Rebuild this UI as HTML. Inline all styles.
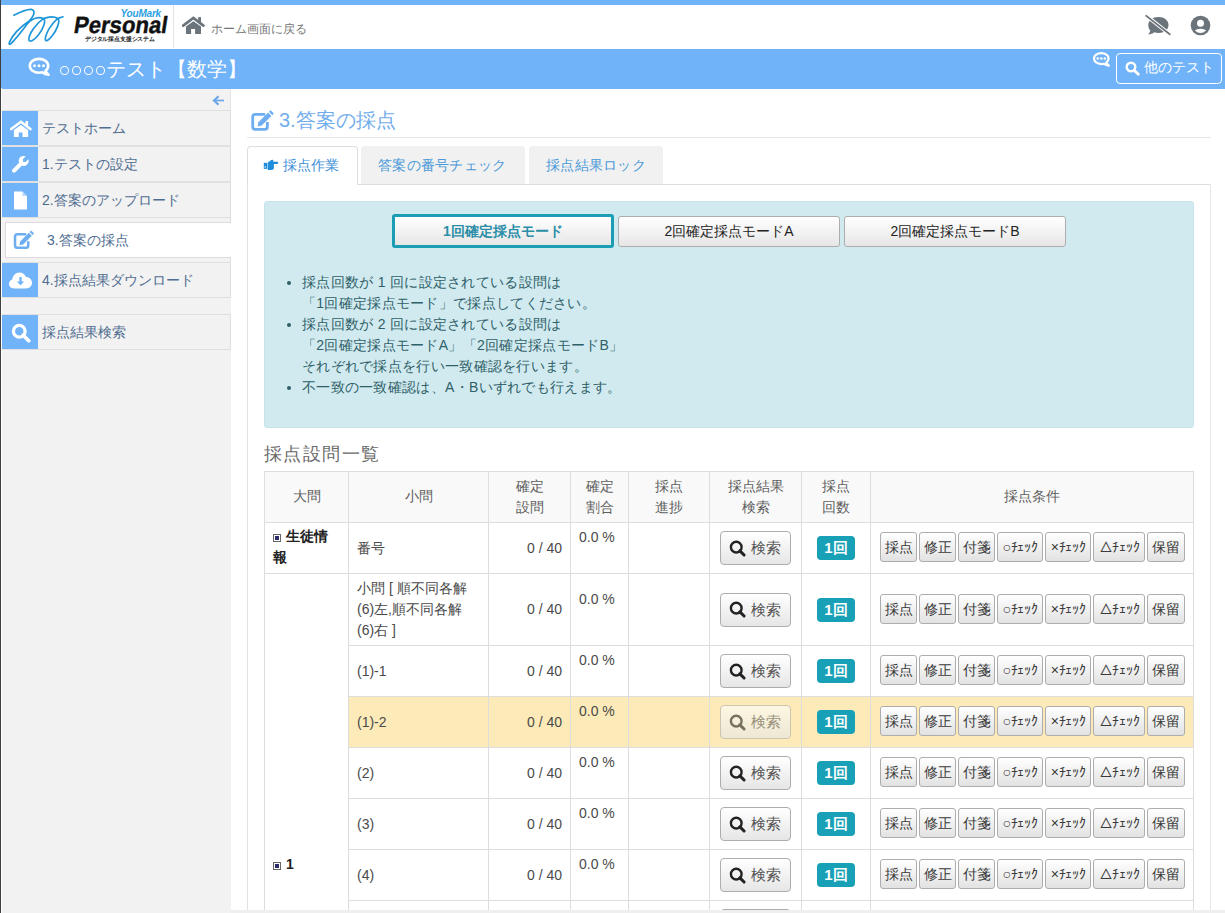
<!DOCTYPE html>
<html lang="ja"><head><meta charset="utf-8">
<style>
*{box-sizing:border-box;}
html,body{margin:0;padding:0;}
body{width:1225px;height:913px;overflow:hidden;position:relative;background:#fff;font-family:"Liberation Sans",sans-serif;font-size:14px;color:#333;}
.abs{position:absolute;}
svg{display:block;}
#edge{left:0;top:0;width:1px;height:913px;background:#404040;z-index:10;}
#topbar{left:0;top:0;width:1225px;height:5px;background:#70b3f8;}
#header{left:0;top:5px;width:1225px;height:44px;background:#fff;}
#titlebar{left:0;top:49px;width:1225px;height:40px;background:#70b3f8;z-index:3;}
#side{left:1px;top:88px;width:230px;height:825px;background:#f2f2f2;}
.nav{position:absolute;left:0;width:230px;height:36px;border:1px solid #e0e0e0;border-left:none;background:#f2f2f2;}
.nav .ic{position:absolute;left:1px;top:0;width:36px;height:34px;background:#70b3f8;}
.nav .ic svg{position:absolute;}
.nav .tx{position:absolute;left:41px;top:0;line-height:34px;font-size:14px;color:#4f6d91;white-space:nowrap;}
#bottomstrip{left:231px;top:910px;width:994px;height:3px;background:#efefef;z-index:5;}

.mode{border:1px solid #adadad;border-radius:3px;background:linear-gradient(#fff,#e6e6e6);font-size:14px;color:#222;text-align:center;line-height:29px;white-space:nowrap;}
.mode.sel{border:3px solid #1b9db3;color:#2b8ea8;font-weight:bold;line-height:28px;}
#bul ul{margin:0;padding:0 0 0 38px;font-size:14px;line-height:21px;color:#2f5f68;letter-spacing:0.3px;}
#bul li{white-space:nowrap;}

.th{text-align:center;font-size:14px;line-height:21px;color:#5e5e5e;white-space:nowrap;}
.td{font-size:14px;line-height:21px;color:#4a4a4a;white-space:nowrap;}
.sbtn{width:71px;height:34px;border:1px solid #adadad;border-radius:4px;background:linear-gradient(#fff,#e6e6e6);color:#222;}
.sbtn span{position:absolute;left:30px;top:6px;font-size:15px;line-height:20px;color:#555;}
.sbtn.dis{opacity:.6;}
.badge{width:38px;height:24px;border-radius:4px;background:#17a0b6;color:#fff;font-weight:bold;font-size:15px;line-height:24px;text-align:center;}
.cbtn{height:30px;border:1px solid #adadad;border-radius:3px;background:linear-gradient(#fff,#e2e2e2);font-size:14px;line-height:28px;text-align:center;color:#3a3a3a;white-space:nowrap;overflow:hidden;}
.hw{font-size:14px;letter-spacing:-0.3px;}
.dai{font-size:14px;line-height:21px;font-weight:bold;color:#222;white-space:nowrap;}
.dai .box{display:inline-block;width:8px;height:8px;border:1px solid #666;margin-right:5px;vertical-align:-1px;position:relative;}
.dai .box:after{content:"";position:absolute;left:1px;top:1px;width:4px;height:4px;background:#2c2c6c;}
</style></head><body>
<div id="edge" class="abs"></div><div class="abs" style="left:1px;top:88px;width:1px;height:825px;background:#fff;z-index:10;"></div>
<div id="topbar" class="abs"></div>
<div id="header" class="abs">
  <!-- logo mark -->
  <svg class="abs" style="left:0;top:0" width="70" height="43" viewBox="0 5 70 43">
    <path d="M13.8,15.2 C19,12.5 26,9 31.3,9.3 C34.5,9.6 34.5,13 33,15.9 C31.8,18 30.8,19.5 29.5,20.7 C21,26.5 12.5,35 9.5,42 C8.5,44.5 9.8,45 11.5,43.2 C15.5,39 20,33.5 23.4,29 C25.5,26 27.5,23.5 30,21 C34,18 39.5,17 43.5,18.6 C46.5,20.5 43,29.5 38,35.5 C33.5,41 29.5,42.5 28.8,39.8 C28.5,34 36.5,23 43.5,18.6 C48,16.8 54,16.2 57.8,18.4 C60.8,21 56.5,30.5 52,36 C48,41 45.5,42 45.3,39 C45.8,33 51.5,23.5 57.8,18.4 L63,16.8" fill="none" stroke="#1e96d8" stroke-width="1.7" stroke-linecap="round" stroke-linejoin="round"/>
  </svg>
  <div class="abs" style="left:120.5px;top:3px;font-size:10px;line-height:12px;font-weight:bold;font-style:italic;color:#2ba0e0;letter-spacing:-0.2px;">YouMark</div>
  <div class="abs" style="left:72.5px;top:6px;font-size:23.5px;line-height:28px;font-weight:bold;color:#111;-webkit-text-stroke:0.4px #111;transform-origin:0 22px;transform:skewX(-9deg) scaleX(0.94);">Personal</div>
  <div class="abs" style="left:85px;top:30px;font-size:6px;line-height:8px;font-weight:bold;color:#222;white-space:nowrap;transform-origin:0 0;transform:scaleX(0.97);">デジタル採点支援システム</div>
  <div class="abs" style="left:173px;top:0;width:1px;height:43px;background:#e3e3e3;"></div>
  <svg class="abs" style="left:182px;top:11px" width="23" height="19" viewBox="0 0 23 19">
    <path d="M1.2,9.6 L11.4,1.9 L21.4,9.6" fill="none" stroke="#6b737b" stroke-width="2.7" stroke-linecap="round" stroke-linejoin="miter"/>
    <rect x="16.2" y="1.1" width="2.8" height="5.5" fill="#6b737b"/>
    <path d="M4,10.6 L11.4,5.2 L19,10.6 L19,17.9 L13.1,17.9 L13.1,13.1 L9.1,13.1 L9.1,17.9 L4,17.9 Z" fill="#6b737b"/>
  </svg>
  <div class="abs" style="left:210.5px;top:15.5px;font-size:12px;line-height:16px;color:#777;white-space:nowrap;">ホーム画面に戻る</div>
  <!-- comment slash -->
  <svg class="abs" style="left:1144px;top:9px" width="28" height="23" viewBox="0 0 28 23">
    <path d="M14.5,3 C20.3,3 24.5,6.5 24.5,11 C24.5,15.5 20.3,19 14.5,19 C13,19 11.6,18.8 10.3,18.3 C8.6,19.6 6.6,20.4 4.2,20.6 C5.3,19.4 6.1,18 6.3,16.6 C5,15.2 4.3,13.2 4.3,11 C4.3,6.5 8.7,3 14.5,3 Z" fill="#6b737b"/>
    <path d="M2,1.5 L26,20.5" stroke="#fff" stroke-width="3.6"/>
    <path d="M2.3,1.8 L25.7,20.2" stroke="#6b737b" stroke-width="1.7" stroke-linecap="square"/>
  </svg>
  <!-- user circle -->
  <svg class="abs" style="left:1190px;top:10px" width="21" height="21" viewBox="0 0 21 21">
    <defs><clipPath id="uc"><circle cx="10.5" cy="10.5" r="7.4"/></clipPath></defs>
    <circle cx="10.5" cy="10.5" r="9.8" fill="#6b737b"/>
    <circle cx="10.5" cy="8.2" r="3.5" fill="#fff"/>
    <path d="M2,21 C2.5,16 6,13.8 10.5,13.8 C15,13.8 18.5,16 19,21 Z" fill="#fff" clip-path="url(#uc)"/>
  </svg>
</div>
<div id="titlebar" class="abs">
  <svg class="abs" style="left:24px;top:5px" width="30" height="26" viewBox="0 0 30 26">
    <path d="M15,4.9 C20.1,4.9 24.2,7.9 24.2,11.8 C24.2,13.9 23.1,15.7 21.3,17 L24.6,20.8 C22,20.6 19.8,19.6 18.3,18.3 C17.3,18.6 16.2,18.7 15,18.7 C9.9,18.7 5.8,15.6 5.8,11.8 C5.8,7.9 9.9,4.9 15,4.9 Z" fill="none" stroke="#fff" stroke-width="2.6" stroke-linejoin="round"/>
    <circle cx="10.5" cy="11.7" r="1.5" fill="#fff"/><circle cx="15" cy="11.7" r="1.5" fill="#fff"/><circle cx="19.5" cy="11.7" r="1.5" fill="#fff"/>
  </svg>
  <div class="abs" style="left:59.8px;top:17px;width:9px;height:9.4px;border:1.4px solid #fff;border-radius:50%;"></div><div class="abs" style="left:71.9px;top:17px;width:9px;height:9.4px;border:1.4px solid #fff;border-radius:50%;"></div><div class="abs" style="left:84.0px;top:17px;width:9px;height:9.4px;border:1.4px solid #fff;border-radius:50%;"></div><div class="abs" style="left:96.3px;top:17px;width:9px;height:9.4px;border:1.4px solid #fff;border-radius:50%;"></div><div class="abs" style="left:106px;top:7.5px;font-size:20px;line-height:24px;color:#fff;white-space:nowrap;letter-spacing:0.2px;">テスト【数学】</div>
  <svg class="abs" style="left:1093px;top:2.9px" width="17" height="14.9" viewBox="4.5 3.5 21.5 18.8">
    <path d="M15,4.9 C20.1,4.9 24.2,7.9 24.2,11.8 C24.2,13.9 23.1,15.7 21.3,17 L24.6,20.8 C22,20.6 19.8,19.6 18.3,18.3 C17.3,18.6 16.2,18.7 15,18.7 C9.9,18.7 5.8,15.6 5.8,11.8 C5.8,7.9 9.9,4.9 15,4.9 Z" fill="none" stroke="#fff" stroke-width="2.8" stroke-linejoin="round"/>
    <circle cx="10.5" cy="11.7" r="1.6" fill="#fff"/><circle cx="15" cy="11.7" r="1.6" fill="#fff"/><circle cx="19.5" cy="11.7" r="1.6" fill="#fff"/>
  </svg>
  <div class="abs" style="left:1116px;top:4px;width:106px;height:31px;border:1px solid #fff;border-radius:4px;"></div>
  <svg class="abs" style="left:1125px;top:11.5px" width="15" height="15" viewBox="0 0 15 15">
    <circle cx="6" cy="6" r="4.3" fill="none" stroke="#fff" stroke-width="2.4"/>
    <path d="M9.2,9.2 L13.3,13.3" stroke="#fff" stroke-width="2.8" stroke-linecap="round"/>
  </svg>
  <div class="abs" style="left:1144px;top:9px;font-size:14px;line-height:18px;color:#fff;white-space:nowrap;">他のテスト</div>
</div>
<div id="side" class="abs">
  <div class="abs" style="left:229px;top:2px;width:1px;height:20px;background:#e3e3e3;"></div>
  <svg class="abs" style="left:211px;top:7px" width="13" height="11" viewBox="0 0 13 11">
    <path d="M12,5.5 L2.5,5.5" stroke="#6ea6ea" stroke-width="1.7"/><path d="M6.5,1.2 L2,5.5 L6.5,9.8" fill="none" stroke="#6ea6ea" stroke-width="2.2"/>
  </svg>
  <div class="nav" style="top:22px;">
    <div class="ic"><svg style="left:7.5px;top:8.5px" width="22" height="18" viewBox="0 0 23 19">
      <path d="M1.2,9.6 L11.4,1.9 L21.4,9.6" fill="none" stroke="#fff" stroke-width="2.7" stroke-linecap="round" stroke-linejoin="miter"/>
    <rect x="16.2" y="1.1" width="2.8" height="5.5" fill="#fff"/>
    <path d="M4,10.6 L11.4,5.2 L19,10.6 L19,17.9 L13.1,17.9 L13.1,13.1 L9.1,13.1 L9.1,17.9 L4,17.9 Z" fill="#fff"/></svg></div>
    <div class="tx">テストホーム</div>
  </div>
  <div class="nav" style="top:58px;">
    <div class="ic"><svg style="left:9px;top:8px" width="19" height="19" viewBox="0 0 19 19">
      <path d="M17.5,4.2 L14.6,7 L12,6.8 L11.8,4.3 L14.6,1.5 C12.4,0.6 9.9,1.2 8.6,3 C7.6,4.4 7.5,6.2 8.1,7.7 L1.6,14.2 C0.8,15 0.8,16.3 1.6,17.1 C2.4,17.9 3.7,17.9 4.5,17.1 L11,10.6 C12.6,11.3 14.5,11 15.8,9.8 C17.5,8.3 18.2,6.2 17.5,4.2 Z" fill="#fff"/></svg></div>
    <div class="tx">1.テストの設定</div>
  </div>
  <div class="nav" style="top:94px;">
    <div class="ic"><svg style="left:11px;top:8px" width="15" height="19" viewBox="0 0 15 19">
      <path d="M1,0.5 L9.5,0.5 L14,5 L14,18.5 L1,18.5 Z" fill="#fff"/><path d="M9.5,0.5 L9.5,5 L14,5" fill="#70b3f8" opacity="0.5"/></svg></div>
    <div class="tx">2.答案のアップロード</div>
  </div>
  <div class="abs" style="left:229px;top:129px;width:1px;height:5px;background:#dcdcdc;"></div><div class="abs" style="left:229px;top:170px;width:1px;height:5px;background:#dcdcdc;"></div>
  <div class="abs" style="left:4px;top:134px;width:226px;height:36px;border:1px solid #dcdcdc;border-right:none;background:#fff;">
    <svg class="abs" style="left:3.3px;top:2.2px" width="30.6" height="28.8" viewBox="0 0 34 32">
    <path d="M19.2,10.4 L9.2,10.4 Q6.7,10.4 6.7,12.9 L6.7,22.8 Q6.7,25.3 9.2,25.3 L18.9,25.3 Q21.4,25.3 21.4,22.8 L21.4,18" fill="none" stroke="#6eaef0" stroke-width="2.8"/>
    <path d="M11.6,22.6 L12.4,18.3 L22.1,8.6 L25.4,11.9 L15.7,21.6 Z" fill="#6eaef0"/>
    <path d="M22.9,7.8 L24,6.7 Q24.6,6.1 25.2,6.7 L27.4,8.9 Q28,9.5 27.4,10.1 L26.3,11.2 Z" fill="#6eaef0"/>
  </svg>
    <div class="abs" style="left:41px;top:0;line-height:34px;font-size:14px;color:#4f6d91;white-space:nowrap;">3.答案の採点</div>
  </div>
  <div class="nav" style="top:174px;">
    <div class="ic"><svg style="left:6px;top:8px" width="25" height="19" viewBox="0 0 25 19">
      <path d="M6,17.5 C3,17.5 1,15.5 1,12.8 C1,10.6 2.4,8.9 4.4,8.3 C4.6,4.5 7.6,1.5 11.5,1.5 C14.5,1.5 17,3.3 18,6 C21.3,6 24,8.6 24,11.8 C24,15 21.5,17.5 18.3,17.5 Z" fill="#fff"/>
      <path d="M12.5,6 L12.5,12" stroke="#70b3f8" stroke-width="2.4"/><path d="M8.8,10.5 L16.2,10.5 L12.5,14.3 Z" fill="#70b3f8"/></svg></div>
    <div class="tx">4.採点結果ダウンロード</div>
  </div>
  <div class="nav" style="top:226px;">
    <div class="ic"><svg style="left:8.5px;top:7.5px" width="20" height="20" viewBox="0 0 15 15">
      <circle cx="6.2" cy="6.2" r="4.4" fill="none" stroke="#fff" stroke-width="2.5"/>
      <path d="M9.2,9.2 L13.3,13.3" stroke="#fff" stroke-width="2.8" stroke-linecap="round"/></svg></div>
    <div class="tx">採点結果検索</div>
  </div>
</div>
<div id="main" class="abs" style="left:0;top:0;width:1225px;height:913px;pointer-events:none;">
  <!-- page title -->
  <svg class="abs" style="left:246px;top:104px" width="34" height="32" viewBox="0 0 34 32">
    <path d="M19.2,10.4 L9.2,10.4 Q6.7,10.4 6.7,12.9 L6.7,22.8 Q6.7,25.3 9.2,25.3 L18.9,25.3 Q21.4,25.3 21.4,22.8 L21.4,18" fill="none" stroke="#6eaef0" stroke-width="2.8"/>
    <path d="M11.6,22.6 L12.4,18.3 L22.1,8.6 L25.4,11.9 L15.7,21.6 Z" fill="#6eaef0"/>
    <path d="M22.9,7.8 L24,6.7 Q24.6,6.1 25.2,6.7 L27.4,8.9 Q28,9.5 27.4,10.1 L26.3,11.2 Z" fill="#6eaef0"/>
  </svg>
  <div class="abs" style="left:279px;top:107px;font-size:20px;line-height:26px;color:#72adec;white-space:nowrap;">3.答案の採点</div>
  <div class="abs" style="left:247px;top:137px;width:964px;height:1px;background:#e6e6e6;"></div>
  <!-- tabs -->
  <div class="abs" style="left:357px;top:184px;width:854px;height:1px;background:#dedede;"></div>
  <div class="abs" style="left:247px;top:184px;width:1px;height:729px;background:#e2e2e2;"></div>
  <div class="abs" style="left:247px;top:146px;width:111px;height:39px;border:1px solid #dedede;border-bottom:none;border-radius:4px 4px 0 0;background:#fff;"></div>
  <div class="abs" style="left:1210px;top:184px;width:1px;height:729px;background:#e6e6e6;"></div>
  <svg class="abs" style="left:263px;top:158px" width="16" height="13" viewBox="0 0 16 13">
    <path d="M0.8,4.8 L4.3,4.8 L4.3,10.9 L0.8,10.9 Z" fill="#1f8ddb"/><rect x="1.6" y="8.4" width="1.2" height="1.2" fill="#fff"/>
    <path d="M4.8,4.6 L7.6,2.6 C8.3,1.8 9.6,1.6 10.1,2.3 L10.5,3.7 L14.3,3.7 C15.3,3.7 15.6,4.9 15,5.5 C14.8,5.8 14.5,5.9 14.2,5.9 L10.9,5.9 L10.9,9.8 C10.9,11.2 9.8,12 8.4,12 L4.8,12 Z" fill="#1f8ddb"/>
  </svg>
  <div class="abs" style="left:283px;top:156px;font-size:14px;line-height:18px;color:#3d8fd6;white-space:nowrap;">採点作業</div>
  <div class="abs" style="left:361px;top:146px;width:164px;height:38px;background:#f1f1f1;border-radius:4px 4px 0 0;"></div>
  <div class="abs" style="left:378px;top:156px;font-size:14px;line-height:18px;color:#4a99d8;white-space:nowrap;letter-spacing:0.3px;">答案の番号チェック</div>
  <div class="abs" style="left:529px;top:146px;width:134px;height:38px;background:#f1f1f1;border-radius:4px 4px 0 0;"></div>
  <div class="abs" style="left:546px;top:156px;font-size:14px;line-height:18px;color:#4a99d8;white-space:nowrap;letter-spacing:0.3px;">採点結果ロック</div>
  <!-- info box -->
  <div class="abs" style="left:264px;top:201px;width:930px;height:227px;background:#d1eaf0;border:1px solid #c6e4ec;border-radius:3px;"></div>
  <div class="abs mode sel" style="left:392px;top:214px;width:222px;height:34px;">1回確定採点モード</div>
  <div class="abs mode" style="left:618px;top:216px;width:222px;height:31px;">2回確定採点モードA</div>
  <div class="abs mode" style="left:844px;top:216px;width:222px;height:31px;">2回確定採点モードB</div>
  <div class="abs" id="bul" style="left:264px;top:272px;">
    <ul>
      <li>採点回数が 1 回に設定されている設問は<br>「1回確定採点モード」で採点してください。</li>
      <li>採点回数が 2 回に設定されている設問は<br>「2回確定採点モードA」「2回確定採点モードB」<br>それぞれで採点を行い一致確認を行います。</li>
      <li>不一致の一致確認は、A・Bいずれでも行えます。</li>
    </ul>
  </div>
  <div class="abs" style="left:264px;top:442px;font-size:18px;line-height:24px;color:#6a6a6a;white-space:nowrap;letter-spacing:1.4px;">採点設問一覧</div>
  <div class="abs" style="left:265px;top:472px;width:928px;height:50px;background:#f9f9f9;"></div>
  <div class="abs" style="left:349px;top:697px;width:844px;height:50px;background:#fcebb8;"></div>
  <div class="abs" style="left:264px;top:471px;width:930px;height:1px;background:#dddddd;"></div>
  <div class="abs" style="left:264px;top:522px;width:930px;height:1px;background:#dddddd;"></div>
  <div class="abs" style="left:264px;top:573px;width:930px;height:1px;background:#dddddd;"></div>
  <div class="abs" style="left:348px;top:645px;width:846px;height:1px;background:#dddddd;"></div>
  <div class="abs" style="left:348px;top:696px;width:846px;height:1px;background:#dddddd;"></div>
  <div class="abs" style="left:348px;top:747px;width:846px;height:1px;background:#dddddd;"></div>
  <div class="abs" style="left:348px;top:798px;width:846px;height:1px;background:#dddddd;"></div>
  <div class="abs" style="left:348px;top:849px;width:846px;height:1px;background:#dddddd;"></div>
  <div class="abs" style="left:348px;top:900px;width:846px;height:1px;background:#dddddd;"></div>
  <div class="abs" style="left:348px;top:951px;width:846px;height:1px;background:#dddddd;"></div>
  <div class="abs" style="left:264px;top:471px;width:1px;height:442px;background:#dddddd;"></div>
  <div class="abs" style="left:348px;top:471px;width:1px;height:442px;background:#dddddd;"></div>
  <div class="abs" style="left:488px;top:471px;width:1px;height:442px;background:#dddddd;"></div>
  <div class="abs" style="left:570px;top:471px;width:1px;height:442px;background:#dddddd;"></div>
  <div class="abs" style="left:628px;top:471px;width:1px;height:442px;background:#dddddd;"></div>
  <div class="abs" style="left:709px;top:471px;width:1px;height:442px;background:#dddddd;"></div>
  <div class="abs" style="left:801px;top:471px;width:1px;height:442px;background:#dddddd;"></div>
  <div class="abs" style="left:870px;top:471px;width:1px;height:442px;background:#dddddd;"></div>
  <div class="abs" style="left:1193px;top:471px;width:1px;height:442px;background:#dddddd;"></div>
  <div class="abs th" style="left:246.5px;top:486.0px;width:120px;">大問</div>
  <div class="abs th" style="left:358.5px;top:486.0px;width:120px;">小問</div>
  <div class="abs th" style="left:469.5px;top:475.5px;width:120px;">確定<br>設問</div>
  <div class="abs th" style="left:539.5px;top:475.5px;width:120px;">確定<br>割合</div>
  <div class="abs th" style="left:609px;top:475.5px;width:120px;">採点<br>進捗</div>
  <div class="abs th" style="left:695.5px;top:475.5px;width:120px;">採点結果<br>検索</div>
  <div class="abs th" style="left:776px;top:475.5px;width:120px;">採点<br>回数</div>
  <div class="abs th" style="left:971.5px;top:486.0px;width:120px;">採点条件</div>
  <div class="abs td" style="left:357px;top:537.5px;width:130px;">番号</div>
  <div class="abs td" style="left:480px;top:537.5px;width:82px;text-align:right;">0 / 40</div>
  <div class="abs td" style="left:579px;top:527.0px;width:50px;">0.0 %</div>
  <div class="abs sbtn" style="left:720px;top:531.0px;"><svg class="abs" style="left:8px;top:7.5px" width="17" height="17" viewBox="0 0 15 15"><circle cx="6.4" cy="6.3" r="4.7" fill="none" stroke="currentColor" stroke-width="2.1"/><path d="M9.6,9.6 L13.3,13.3" stroke="currentColor" stroke-width="2.6" stroke-linecap="round"/></svg><span>検索</span></div>
  <div class="abs badge" style="left:817px;top:536.0px;">1回</div>
  <div class="abs cbtn" style="left:880px;top:532px;width:37px;">採点</div>
  <div class="abs cbtn" style="left:919px;top:532px;width:37px;">修正</div>
  <div class="abs cbtn" style="left:958px;top:532px;width:37px;">付箋</div>
  <div class="abs cbtn" style="left:997px;top:532px;width:46px;"><span class="hw">○ﾁｪｯｸ</span></div>
  <div class="abs cbtn" style="left:1045px;top:532px;width:46px;"><span class="hw">×ﾁｪｯｸ</span></div>
  <div class="abs cbtn" style="left:1093px;top:532px;width:52px;"><span class="hw">△ﾁｪｯｸ</span></div>
  <div class="abs cbtn" style="left:1147px;top:532px;width:38px;">保留</div>
  <div class="abs td" style="left:357px;top:578.0px;width:130px;">小問 [ 順不同各解<br>(6)左,順不同各解<br>(6)右 ]</div>
  <div class="abs td" style="left:480px;top:599.0px;width:82px;text-align:right;">0 / 40</div>
  <div class="abs td" style="left:579px;top:588.5px;width:50px;">0.0 %</div>
  <div class="abs sbtn" style="left:720px;top:592.5px;"><svg class="abs" style="left:8px;top:7.5px" width="17" height="17" viewBox="0 0 15 15"><circle cx="6.4" cy="6.3" r="4.7" fill="none" stroke="currentColor" stroke-width="2.1"/><path d="M9.6,9.6 L13.3,13.3" stroke="currentColor" stroke-width="2.6" stroke-linecap="round"/></svg><span>検索</span></div>
  <div class="abs badge" style="left:817px;top:597.5px;">1回</div>
  <div class="abs cbtn" style="left:880px;top:594px;width:37px;">採点</div>
  <div class="abs cbtn" style="left:919px;top:594px;width:37px;">修正</div>
  <div class="abs cbtn" style="left:958px;top:594px;width:37px;">付箋</div>
  <div class="abs cbtn" style="left:997px;top:594px;width:46px;"><span class="hw">○ﾁｪｯｸ</span></div>
  <div class="abs cbtn" style="left:1045px;top:594px;width:46px;"><span class="hw">×ﾁｪｯｸ</span></div>
  <div class="abs cbtn" style="left:1093px;top:594px;width:52px;"><span class="hw">△ﾁｪｯｸ</span></div>
  <div class="abs cbtn" style="left:1147px;top:594px;width:38px;">保留</div>
  <div class="abs td" style="left:357px;top:660.5px;width:130px;">(1)-1</div>
  <div class="abs td" style="left:480px;top:660.5px;width:82px;text-align:right;">0 / 40</div>
  <div class="abs td" style="left:579px;top:650.0px;width:50px;">0.0 %</div>
  <div class="abs sbtn" style="left:720px;top:654.0px;"><svg class="abs" style="left:8px;top:7.5px" width="17" height="17" viewBox="0 0 15 15"><circle cx="6.4" cy="6.3" r="4.7" fill="none" stroke="currentColor" stroke-width="2.1"/><path d="M9.6,9.6 L13.3,13.3" stroke="currentColor" stroke-width="2.6" stroke-linecap="round"/></svg><span>検索</span></div>
  <div class="abs badge" style="left:817px;top:659.0px;">1回</div>
  <div class="abs cbtn" style="left:880px;top:655px;width:37px;">採点</div>
  <div class="abs cbtn" style="left:919px;top:655px;width:37px;">修正</div>
  <div class="abs cbtn" style="left:958px;top:655px;width:37px;">付箋</div>
  <div class="abs cbtn" style="left:997px;top:655px;width:46px;"><span class="hw">○ﾁｪｯｸ</span></div>
  <div class="abs cbtn" style="left:1045px;top:655px;width:46px;"><span class="hw">×ﾁｪｯｸ</span></div>
  <div class="abs cbtn" style="left:1093px;top:655px;width:52px;"><span class="hw">△ﾁｪｯｸ</span></div>
  <div class="abs cbtn" style="left:1147px;top:655px;width:38px;">保留</div>
  <div class="abs td" style="left:357px;top:711.5px;width:130px;">(1)-2</div>
  <div class="abs td" style="left:480px;top:711.5px;width:82px;text-align:right;">0 / 40</div>
  <div class="abs td" style="left:579px;top:701.0px;width:50px;">0.0 %</div>
  <div class="abs sbtn dis" style="left:720px;top:705.0px;"><svg class="abs" style="left:8px;top:7.5px" width="17" height="17" viewBox="0 0 15 15"><circle cx="6.4" cy="6.3" r="4.7" fill="none" stroke="currentColor" stroke-width="2.1"/><path d="M9.6,9.6 L13.3,13.3" stroke="currentColor" stroke-width="2.6" stroke-linecap="round"/></svg><span>検索</span></div>
  <div class="abs badge" style="left:817px;top:710.0px;">1回</div>
  <div class="abs cbtn" style="left:880px;top:706px;width:37px;">採点</div>
  <div class="abs cbtn" style="left:919px;top:706px;width:37px;">修正</div>
  <div class="abs cbtn" style="left:958px;top:706px;width:37px;">付箋</div>
  <div class="abs cbtn" style="left:997px;top:706px;width:46px;"><span class="hw">○ﾁｪｯｸ</span></div>
  <div class="abs cbtn" style="left:1045px;top:706px;width:46px;"><span class="hw">×ﾁｪｯｸ</span></div>
  <div class="abs cbtn" style="left:1093px;top:706px;width:52px;"><span class="hw">△ﾁｪｯｸ</span></div>
  <div class="abs cbtn" style="left:1147px;top:706px;width:38px;">保留</div>
  <div class="abs td" style="left:357px;top:762.5px;width:130px;">(2)</div>
  <div class="abs td" style="left:480px;top:762.5px;width:82px;text-align:right;">0 / 40</div>
  <div class="abs td" style="left:579px;top:752.0px;width:50px;">0.0 %</div>
  <div class="abs sbtn" style="left:720px;top:756.0px;"><svg class="abs" style="left:8px;top:7.5px" width="17" height="17" viewBox="0 0 15 15"><circle cx="6.4" cy="6.3" r="4.7" fill="none" stroke="currentColor" stroke-width="2.1"/><path d="M9.6,9.6 L13.3,13.3" stroke="currentColor" stroke-width="2.6" stroke-linecap="round"/></svg><span>検索</span></div>
  <div class="abs badge" style="left:817px;top:761.0px;">1回</div>
  <div class="abs cbtn" style="left:880px;top:757px;width:37px;">採点</div>
  <div class="abs cbtn" style="left:919px;top:757px;width:37px;">修正</div>
  <div class="abs cbtn" style="left:958px;top:757px;width:37px;">付箋</div>
  <div class="abs cbtn" style="left:997px;top:757px;width:46px;"><span class="hw">○ﾁｪｯｸ</span></div>
  <div class="abs cbtn" style="left:1045px;top:757px;width:46px;"><span class="hw">×ﾁｪｯｸ</span></div>
  <div class="abs cbtn" style="left:1093px;top:757px;width:52px;"><span class="hw">△ﾁｪｯｸ</span></div>
  <div class="abs cbtn" style="left:1147px;top:757px;width:38px;">保留</div>
  <div class="abs td" style="left:357px;top:813.5px;width:130px;">(3)</div>
  <div class="abs td" style="left:480px;top:813.5px;width:82px;text-align:right;">0 / 40</div>
  <div class="abs td" style="left:579px;top:803.0px;width:50px;">0.0 %</div>
  <div class="abs sbtn" style="left:720px;top:807.0px;"><svg class="abs" style="left:8px;top:7.5px" width="17" height="17" viewBox="0 0 15 15"><circle cx="6.4" cy="6.3" r="4.7" fill="none" stroke="currentColor" stroke-width="2.1"/><path d="M9.6,9.6 L13.3,13.3" stroke="currentColor" stroke-width="2.6" stroke-linecap="round"/></svg><span>検索</span></div>
  <div class="abs badge" style="left:817px;top:812.0px;">1回</div>
  <div class="abs cbtn" style="left:880px;top:808px;width:37px;">採点</div>
  <div class="abs cbtn" style="left:919px;top:808px;width:37px;">修正</div>
  <div class="abs cbtn" style="left:958px;top:808px;width:37px;">付箋</div>
  <div class="abs cbtn" style="left:997px;top:808px;width:46px;"><span class="hw">○ﾁｪｯｸ</span></div>
  <div class="abs cbtn" style="left:1045px;top:808px;width:46px;"><span class="hw">×ﾁｪｯｸ</span></div>
  <div class="abs cbtn" style="left:1093px;top:808px;width:52px;"><span class="hw">△ﾁｪｯｸ</span></div>
  <div class="abs cbtn" style="left:1147px;top:808px;width:38px;">保留</div>
  <div class="abs td" style="left:357px;top:864.5px;width:130px;">(4)</div>
  <div class="abs td" style="left:480px;top:864.5px;width:82px;text-align:right;">0 / 40</div>
  <div class="abs td" style="left:579px;top:854.0px;width:50px;">0.0 %</div>
  <div class="abs sbtn" style="left:720px;top:858.0px;"><svg class="abs" style="left:8px;top:7.5px" width="17" height="17" viewBox="0 0 15 15"><circle cx="6.4" cy="6.3" r="4.7" fill="none" stroke="currentColor" stroke-width="2.1"/><path d="M9.6,9.6 L13.3,13.3" stroke="currentColor" stroke-width="2.6" stroke-linecap="round"/></svg><span>検索</span></div>
  <div class="abs badge" style="left:817px;top:863.0px;">1回</div>
  <div class="abs cbtn" style="left:880px;top:859px;width:37px;">採点</div>
  <div class="abs cbtn" style="left:919px;top:859px;width:37px;">修正</div>
  <div class="abs cbtn" style="left:958px;top:859px;width:37px;">付箋</div>
  <div class="abs cbtn" style="left:997px;top:859px;width:46px;"><span class="hw">○ﾁｪｯｸ</span></div>
  <div class="abs cbtn" style="left:1045px;top:859px;width:46px;"><span class="hw">×ﾁｪｯｸ</span></div>
  <div class="abs cbtn" style="left:1093px;top:859px;width:52px;"><span class="hw">△ﾁｪｯｸ</span></div>
  <div class="abs cbtn" style="left:1147px;top:859px;width:38px;">保留</div>
  <div class="abs td" style="left:357px;top:915.5px;width:130px;">(5)</div>
  <div class="abs td" style="left:480px;top:915.5px;width:82px;text-align:right;">0 / 40</div>
  <div class="abs td" style="left:579px;top:905.0px;width:50px;">0.0 %</div>
  <div class="abs sbtn" style="left:720px;top:909.0px;"><svg class="abs" style="left:8px;top:7.5px" width="17" height="17" viewBox="0 0 15 15"><circle cx="6.4" cy="6.3" r="4.7" fill="none" stroke="currentColor" stroke-width="2.1"/><path d="M9.6,9.6 L13.3,13.3" stroke="currentColor" stroke-width="2.6" stroke-linecap="round"/></svg><span>検索</span></div>
  <div class="abs badge" style="left:817px;top:914.0px;">1回</div>
  <div class="abs cbtn" style="left:880px;top:910px;width:37px;">採点</div>
  <div class="abs cbtn" style="left:919px;top:910px;width:37px;">修正</div>
  <div class="abs cbtn" style="left:958px;top:910px;width:37px;">付箋</div>
  <div class="abs cbtn" style="left:997px;top:910px;width:46px;"><span class="hw">○ﾁｪｯｸ</span></div>
  <div class="abs cbtn" style="left:1045px;top:910px;width:46px;"><span class="hw">×ﾁｪｯｸ</span></div>
  <div class="abs cbtn" style="left:1093px;top:910px;width:52px;"><span class="hw">△ﾁｪｯｸ</span></div>
  <div class="abs cbtn" style="left:1147px;top:910px;width:38px;">保留</div>
  <div class="abs dai" style="left:273px;top:526px;"><span class="box"></span>生徒情<br>報</div>
  <div class="abs dai" style="left:273px;top:854px;"><span class="box"></span>1</div>
</div>
<div id="bottomstrip" class="abs"></div>
</body></html>
